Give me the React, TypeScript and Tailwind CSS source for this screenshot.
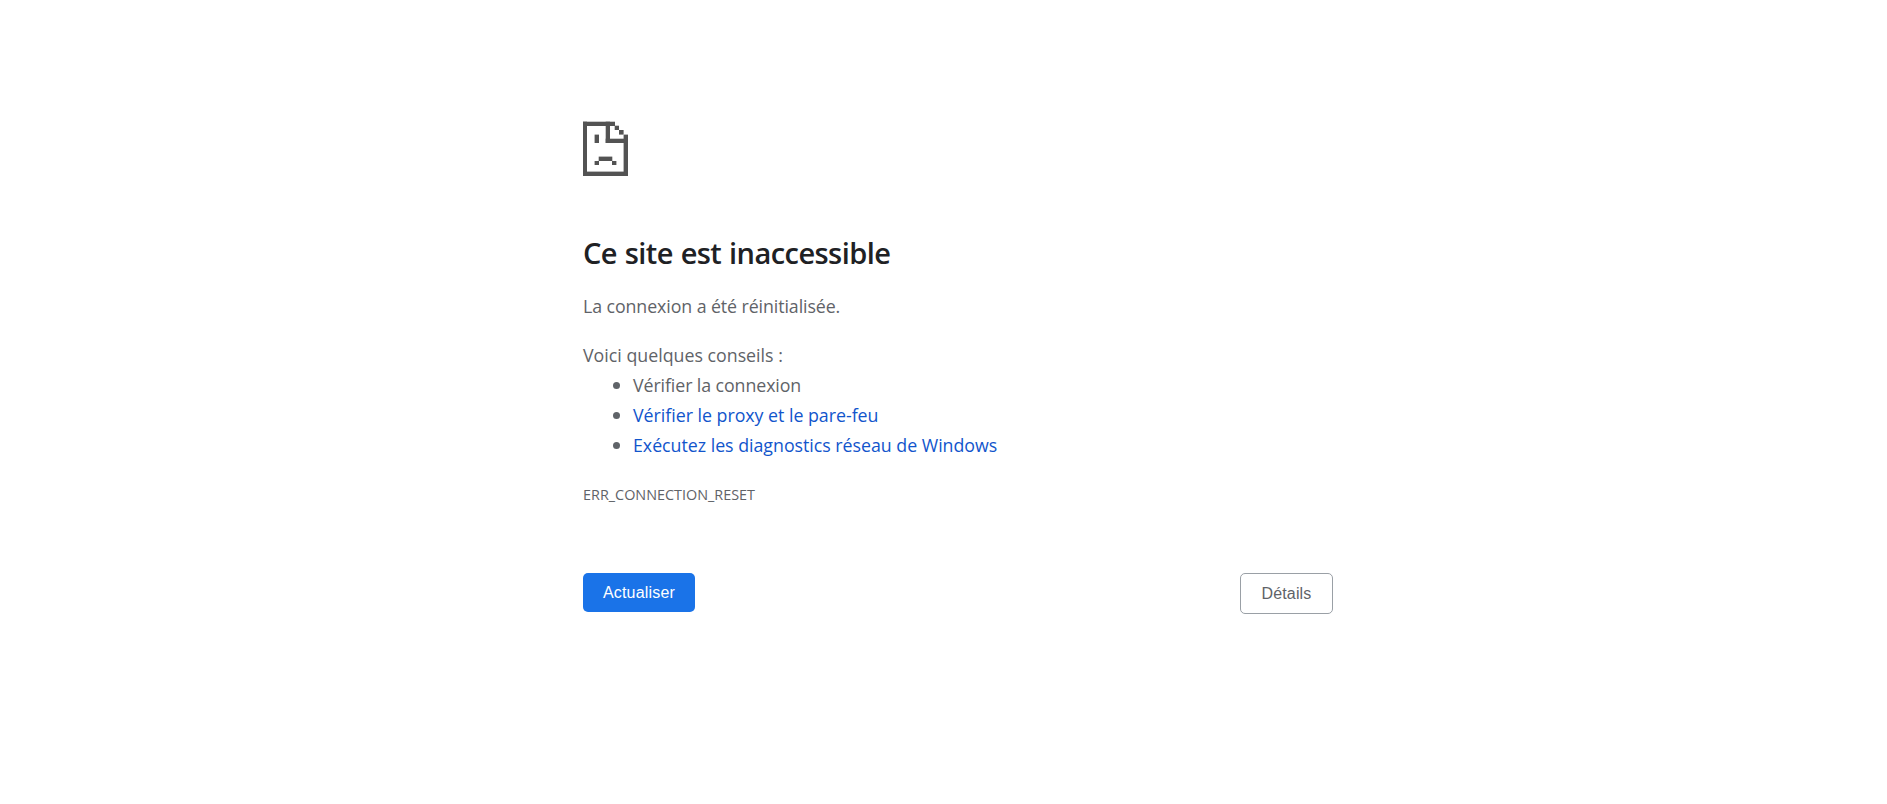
const cells = [
    // page outline
    [0, 0.7, 32, 4.3],
    [0, 0.7, 4, 54.3],
    [0, 50.6, 45, 4.4],
    [40.6, 13.6, 4.4, 41.4],
    // folded corner
    [22.7, 0.7, 4.3, 21.3],
    [22.7, 17.7, 22.3, 4.3],
    [31.7, 4.7, 4.3, 4.3],
    [36, 9, 4.6, 4.6],
    // face
    [11.6, 13.6, 4.4, 8.4],
    [15.7, 35.6, 13.6, 4.4],
    [11.6, 40, 4.4, 4],
    [29, 40, 4.4, 4],
];

function SadPageIcon() {
    return (
        <svg width="45" height="55" viewBox="0 0 45 55" fill="#535353" aria-hidden="true">
            {cells.map(([x, y, w, h], i) => (
                <rect key={i} x={x} y={y} width={w} height={h} />
            ))}
        </svg>
    );
}

function Bullet() {
    return <span className="ml-[30px] mr-[13px] size-[7px] rounded-full bg-[#5f6368]" />;
}

export default function App() {
    return (
        <div className="min-h-[804px] bg-white font-['Open_Sans',sans-serif] text-[17.8px] leading-[30px] text-[#5f6368]">
            <main className="ml-[583px] w-[750px] pt-[121px]">
                <SadPageIcon />

                <h1 className="mt-[59px] h-[36px] whitespace-nowrap text-[29px] font-semibold leading-[36px] tracking-[-0.56px] [word-spacing:0.8px] text-[#202124]">
                    Ce site est inaccessible
                </h1>

                <p className="mt-[20px] tracking-[-0.09px]">La connexion a été réinitialisée.</p>

                <div className="mt-[19px]">
                    <p>Voici quelques conseils :</p>
                    <ul>
                        <li className="flex items-center tracking-[-0.09px]">
                            <Bullet />
                            Vérifier la connexion
                        </li>
                        <li className="flex items-center">
                            <Bullet />
                            <a href="#proxy" className="tracking-[-0.02px] text-[#1155cc]">Vérifier le proxy et le pare-feu</a>
                        </li>
                        <li className="flex items-center">
                            <Bullet />
                            <a href="#diagnostics" className="tracking-[-0.02px] text-[#1155cc]">Exécutez les diagnostics réseau de Windows</a>
                        </li>
                    </ul>
                </div>

                <p className="mt-[20px] text-[14.4px]">ERR_CONNECTION_RESET</p>

                <div className="mt-[63px] flex items-start justify-between font-['Liberation_Sans',Arial,sans-serif] text-[16px] leading-[19px]">
                    <button className="h-[39px] w-[112px] rounded-[5px] bg-[#1a73e8] tracking-[0.2px] text-white">Actualiser</button>
                    <button className="h-[41px] w-[93px] rounded-[5px] border border-[#9aa0a6] bg-white tracking-[0.15px]">Détails</button>
                </div>
            </main>
        </div>
    );
}
